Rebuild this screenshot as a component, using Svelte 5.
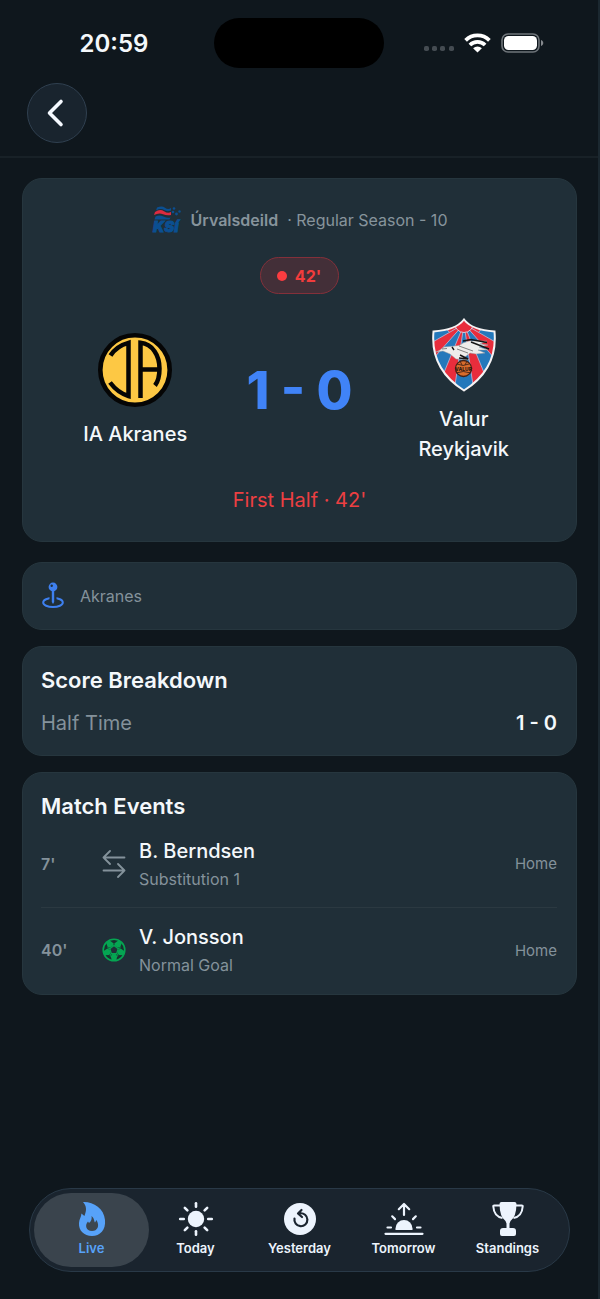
<script>
  const events = [
    { minute: "7'", icon: 'swap', player: 'B. Berndsen', detail: 'Substitution 1', side: 'Home' },
    { minute: "40'", icon: 'ball', player: 'V. Jonsson', detail: 'Normal Goal', side: 'Home' }
  ];
  const tabs = ['Live', 'Today', 'Yesterday', 'Tomorrow', 'Standings'];
  let active = $state('Live');
  const fifths = [0, 72, 144, 216, 288];
  const eighths = [0, 45, 90, 135, 180, 225, 270, 315];
</script>

<div class="page">
  <div class="status">
    <div class="clock">20:59</div>
    <div class="island"></div>
    <div class="signals">
      <svg width="30" height="6" viewBox="0 0 30 6" fill="#454c52" aria-hidden="true">
        <rect x="0" y="0" width="5" height="5" rx="1.8" /><rect x="8" y="0" width="5" height="5" rx="1.8" />
        <rect x="16" y="0" width="5" height="5" rx="1.8" /><rect x="25" y="0" width="5" height="5" rx="1.8" />
      </svg>
      <svg class="wifi" width="27" height="20" viewBox="0 0 27 20" fill="none" stroke="#fff" stroke-width="3.8" aria-hidden="true">
        <path d="M1.600 7.300a17 17 0 0 1 23.800 0" /><path d="M5.900 12a10.800 10.800 0 0 1 15.200 0" />
        <path d="M13.500 19.600l-4.400-4.300a6.200 6.200 0 0 1 8.800 0z" fill="#fff" stroke="none" />
      </svg>
      <svg width="43" height="20" viewBox="0 0 43 20" aria-hidden="true">
        <rect x="1" y="1" width="37" height="18" rx="6" fill="none" stroke="#6f757a" stroke-width="1.6" />
        <rect x="3" y="3" width="33" height="14" rx="4.5" fill="#fff" />
        <path d="M40 7c3 .9 3 5.100 0 6z" fill="#85898d" />
      </svg>
    </div>
  </div>

  <header>
    <button class="back" aria-label="Back">
      <svg width="20" height="30" viewBox="0 0 20 30" fill="none" stroke="#f5f9ff" stroke-width="3.6" stroke-linecap="round" stroke-linejoin="round"><path d="M15 3.500L3.500 15 15 26.500" /></svg>
    </button>
  </header>

  <main>
    <section class="card match">
      <div class="league">
        <svg width="30" height="28" viewBox="0 0 30 28" aria-hidden="true">
          <path d="M5 1.500q5-2 8 .2t6 .3v2.500q-4 1.500-7-.5t-8 .5z" fill="#0b4f91" />
          <path d="M3 6q5-3.500 9-.8t7 .8v3q-4 1-8-.8T2 9z" fill="#dd2b40" />
          <path d="M3.500 10.500q4-2 8 0t7 1l-1 2H2.500z" fill="#0b4f91" />
          <g fill="#0b4f91"><circle cx="22" cy="2.500" r="1.300" /><circle cx="27.500" cy="5.500" r="1.200" /><circle cx="21" cy="6" r="1.300" /><circle cx="24.500" cy="8" r="1.400" /></g>
          <text x="1" y="25.500" fill="#0b4f91" stroke="#0b4f91" stroke-width=".8" font-family="Inter, sans-serif" font-size="15" font-weight="900" font-style="italic">KSí</text>
        </svg>
        <strong>Úrvalsdeild</strong>
        <span>· Regular Season - 10</span>
      </div>
      <div class="live"><i></i>42'</div>
      <div class="teams">
        <div class="team">
          <svg width="74" height="74" viewBox="0 0 74 74" aria-hidden="true">
            <circle cx="37" cy="37" r="34.700" fill="#fdc844" stroke="#050505" stroke-width="4.600" />
            <g fill="none" stroke="#050505" stroke-width="4.500">
              <path d="M12.500 22.500Q18.500 13 30.500 9.800V63Q20 60 12 49.500" />
              <path d="M42.500 65V9.800C55 11 61.500 23 61.500 35.500 61.500 43 60.500 48 57 52.500" />
              <path d="M42.500 36.500h19" />
            </g>
          </svg>
          <div class="name">IA Akranes</div>
        </div>
        <div class="score">1 - 0</div>
        <div class="team">
          <svg width="64" height="74" viewBox="0 0 64 74" aria-hidden="true">
            <defs><clipPath id="shield"><path d="M32 1.500Q40 12 62.500 13.500 66 51 32 72.500-2 51 1.500 13.500 24 12 32 1.500z" /></clipPath></defs>
            <g clip-path="url(#shield)">
              <path d="M0 0h64v74H0z" fill="#2478bb" />
              <g fill="#e82d3c" stroke="#b9bdd8" stroke-width=".8">
                <path d="M32 4L12 8 18 15z" /><path d="M32 6L-8 29V51z" /><path d="M32 6L4 74h18z" />
                <path d="M32 4L52 8 46 15z" /><path d="M32 6L72 29V51z" /><path d="M32 6l28 68H42z" />
              </g>
              <circle cx="32" cy="5" r="9.500" fill="#e82d3c" stroke="#d8c9d9" />
            </g>
            <path d="M32 1.500Q40 12 62.500 13.500 66 51 32 72.500-2 51 1.500 13.500 24 12 32 1.500z" fill="none" stroke="#f5f3f4" stroke-width="2" />
            <path d="M8 32l4-3 11-1q5 0 8-3l6-2 18 0-7 3 8 1-9 2 9 3h-10l7 3-9 1-6-1-5 4 4 3-13-1-6-5-7-3-7 1z" fill="#eeedeb" stroke="#9a9ea2" stroke-width=".5" />
            <path d="M31 23l8-1.500 16 3M39 24l18 7M20 29l2 3M28 37l8 4-9-1" fill="none" stroke="#161616" stroke-width="1.400" />
            <path d="M10 31l5-.5M25 31l11 4M27 28l14 5" fill="none" stroke="#555" stroke-width=".7" />
            <circle cx="31.500" cy="50.500" r="8" fill="#d86c2c" stroke="#442216" stroke-width="1.300" />
            <path d="M25 46q6 3 12 0M24 55q7-3 15 0M28 43l2 4M35 43l-2 4" fill="none" stroke="#442216" stroke-width=".9" />
            <text x="31.500" y="52.500" text-anchor="middle" font-family="Inter, sans-serif" font-size="5" font-weight="800" fill="#301710">VALUR</text>
          </svg>
          <div class="name">Valur Reykjavik</div>
        </div>
      </div>
      <div class="phase">First Half · 42'</div>
    </section>

    <section class="card venue">
      <svg width="24" height="28" viewBox="0 0 24 28" fill="none" stroke="#3e80f0" aria-hidden="true">
        <ellipse cx="12" cy="20.500" rx="9.800" ry="4.600" stroke-width="2" />
        <path d="M12 13v9" stroke="#202f38" stroke-width="7" />
        <path d="M10.800 7h2.400v13l-1.200 2-1.200-2z" fill="#3e80f0" stroke="none" />
        <circle cx="12" cy="5" r="4.400" fill="#3e80f0" stroke="none" /><circle cx="10.700" cy="3.700" r="1.200" fill="#202f38" stroke="none" />
      </svg>
      <span>Akranes</span>
    </section>

    <section class="card">
      <h2>Score Breakdown</h2>
      <div class="period"><span>Half Time</span><b>1 - 0</b></div>
    </section>

    <section class="card timeline">
      <h2>Match Events</h2>
      <ul>
        {#each events as e}
          <li>
            <span class="minute">{e.minute}</span>
            {#if e.icon === 'swap'}
              <svg width="24" height="28" viewBox="0 0 24 28" fill="none" stroke="#84929b" stroke-width="1.800" stroke-linecap="round" stroke-linejoin="round" aria-hidden="true"><path d="M8 1L1.500 7.500 8 14M1.500 7.500h21M16 14l6.500 6.500L16 27M22.500 20.500h-21" /></svg>
            {:else}
              <svg width="24" height="24" viewBox="0 0 24 24" aria-hidden="true">
                <circle cx="12" cy="12" r="10.800" fill="#18312f" stroke="#05a552" stroke-width="1.600" />
                {#each fifths as a}
                  <g transform={`rotate(${a} 12 12)`} fill="#05a552"><path d="M10.200 16h3.600l1.500 2.200-1.300 4.800h-4l-1.300-4.800z" /><path d="M11.500 5h1v4h-1z" /></g>
                {/each}
                <path d="M12 7.600l4.200 3.100-1.600 4.900H9.400l-1.600-4.900z" fill="#202f38" stroke="#05a552" stroke-width="1.200" />
              </svg>
            {/if}
            <div class="who"><strong>{e.player}</strong><span>{e.detail}</span></div>
            <span class="side">{e.side}</span>
          </li>
        {/each}
      </ul>
    </section>
  </main>

  <nav>
    {#each tabs as tab}
      <button class:active={active === tab} onclick={() => (active = tab)}>
        <svg width="40" height="36" viewBox="0 0 40 36" fill="currentColor" aria-hidden="true">
          {#if tab === 'Live'}
            <path d="M11 1C21 .5 32 7 33 19 34 29 28 35 20 35S6.500 29.500 7 22c.2-4 2.500-6.500 2.400-9.500l3 2.500C15 9 14.500 5 11 1z" />
            <path d="M19.500 15c3 2.500 2.500 5 3.500 6.500l1.500-2.500C28 25 25.500 30 20 30c-6 0-7.500-6-4-9.500l1 1.500c2.500-2 3-4.500 2.500-7z" fill="#3c4750" />
          {:else if tab === 'Today'}
            <circle cx="20" cy="18" r="8.200" />
            {#each eighths as a}<path d="M20 2.200v3.600" transform={`rotate(${a} 20 18)`} stroke="currentColor" stroke-width="2.600" stroke-linecap="round" />{/each}
          {:else if tab === 'Yesterday'}
            <circle cx="20" cy="18" r="16" />
            <path d="M14.500 17.500a6.500 6.500 0 1 0 5.500-5.200M21.500 9l-3.500 3.500 4 3.500" fill="none" stroke="#1b2530" stroke-width="2.200" stroke-linecap="round" stroke-linejoin="round" />
          {:else if tab === 'Tomorrow'}
            <path d="M11.500 29v-1.500a8.500 8.500 0 0 1 17 0V29z" />
            <path d="M1.500 32.800h37M3.500 26.500h3.500M33 26.500h3.500M8.200 15.300l2.800 2.800M31.800 15.300L29 18.100M20 14V3.500M14.800 8.200L20 3l5.200 5.200" fill="none" stroke="currentColor" stroke-width="2.200" stroke-linecap="round" stroke-linejoin="round" />
          {:else}
            <path d="M11.500 3q0-2 2-2h13q2 0 2 2-.2 13-6 17l-1 2.500V27h3.500q3 0 3 3v3q0 2-2 2H14q-2 0-2-2v-3q0-3 3-3h3.500v-4.500l-1-2.500Q11.700 16 11.500 3z" />
            <path d="M12 4.500H6.200q-1 0-.9 1Q6 15.500 14.500 17M28 4.500h5.800q1 0 .9 1-.7 10-9.200 11.500" fill="none" stroke="currentColor" stroke-width="2" />
          {/if}
        </svg>
        <span>{tab}</span>
      </button>
    {/each}
  </nav>
</div>

<style>
  :global(body) { margin: 0; background: #0e161c; }
  * { box-sizing: border-box; }
  .page {
    min-height: 100vh; display: flex; flex-direction: column;
    background: #0f171d; border-right: 2px solid #1b2830;
    color: #f4f8fb; font-family: Inter, "Noto Sans", sans-serif;
  }
  svg { display: block; flex: none; }
  .status { display: grid; grid-template-columns: 1fr 170px 1fr; align-items: center; padding-top: 18px; }
  .clock { justify-self: center; padding: 2px 0 0 14px; font-size: 24px; font-weight: 600; line-height: 30px; }
  .island { height: 50px; border-radius: 25px; background: #000; }
  .signals { display: flex; align-items: center; padding-left: 40px; gap: 10px; }
  .signals svg:first-child { margin-top: 12px; }
  header { padding: 15px 27px 13px; border-bottom: 2px solid #182127; }
  button { border: 0; padding: 0; font: inherit; cursor: pointer; }
  .back {
    width: 60px; height: 60px; border-radius: 50%; display: flex; align-items: center; justify-content: center;
    padding-right: 3px; background: #19242e; border: 1px solid #304050;
  }
  main { display: flex; flex-direction: column; gap: 16px; padding: 20px 21px 24px 22px; }
  .card { padding: 18px 19px 18px 18px; border-radius: 20px; background: #202f38; border: 1px solid #26363e; }
  .match { display: flex; flex-direction: column; align-items: center; margin-bottom: 4px; padding: 27px 18px; }
  .league { display: flex; align-items: center; gap: 9px; font-size: 16px; line-height: 28px; color: #87949c; }
  .league strong { font-weight: 600; }
  .live {
    display: flex; align-items: center; gap: 8px; margin-top: 23px; height: 37px; padding: 0 17px 0 16px;
    border-radius: 19px; border: 1px solid #84303a; background: #432f38; color: #f23c3c; font-size: 16px; font-weight: 700;
  }
  .live i { width: 10px; height: 10px; border-radius: 50%; background: #fb3c40; }
  .teams { align-self: stretch; display: grid; grid-template-columns: 1fr 140px 1fr; align-items: center; margin-top: 24px; }
  .team { display: flex; flex-direction: column; align-items: center; gap: 12px; }
  .name { max-width: 130px; font-size: 20px; font-weight: 500; line-height: 30px; text-align: center; }
  .score { text-align: center; font-size: 52px; line-height: 60px; font-weight: 800; color: #4083f7; white-space: nowrap; }
  .phase { margin-top: 22px; font-size: 20px; line-height: 28px; color: #ec3f42; }
  .venue { display: flex; align-items: center; gap: 15px; height: 68px; font-size: 16px; color: #84929b; }
  h2 { margin: 0; font-size: 22px; line-height: 30px; font-weight: 600; }
  .period { display: flex; justify-content: space-between; margin-top: 14px; font-size: 20px; line-height: 28px; color: #84929b; }
  .period b { color: #f4f8fb; font-weight: 600; }
  .timeline { padding-bottom: 1px; }
  ul { margin: 0; padding: 0; list-style: none; }
  li { display: flex; align-items: center; height: 86px; padding-bottom: 1px; }
  li + li { border-top: 1px solid #2b3941; }
  .minute { width: 61px; font-size: 16px; font-weight: 600; color: #84929b; }
  .who { flex: 1; display: flex; flex-direction: column; padding: 2px 0 0 13px; }
  .who strong { font-size: 20px; line-height: 28px; font-weight: 500; }
  .who span { font-size: 16px; line-height: 28px; color: #84929b; }
  .side { font-size: 15px; color: #84929b; }
  nav {
    display: flex; margin: auto 28px 27px 29px; padding: 4px; height: 84px;
    border: 1px solid #293947; border-radius: 42px; background: #1a242e;
  }
  nav button {
    flex: 1 1 0; min-width: 0; border-radius: 37px; display: flex; flex-direction: column; align-items: center; justify-content: center;
    gap: 2px; padding-bottom: 2px; background: none; color: #edf4fd; line-height: 18px;
  }
  nav button + button { margin-left: -11px; }
  nav button span { font-size: 13px; font-weight: 600; }
  nav button.active { background: #3a444d; color: #57a2f9; }
</style>
